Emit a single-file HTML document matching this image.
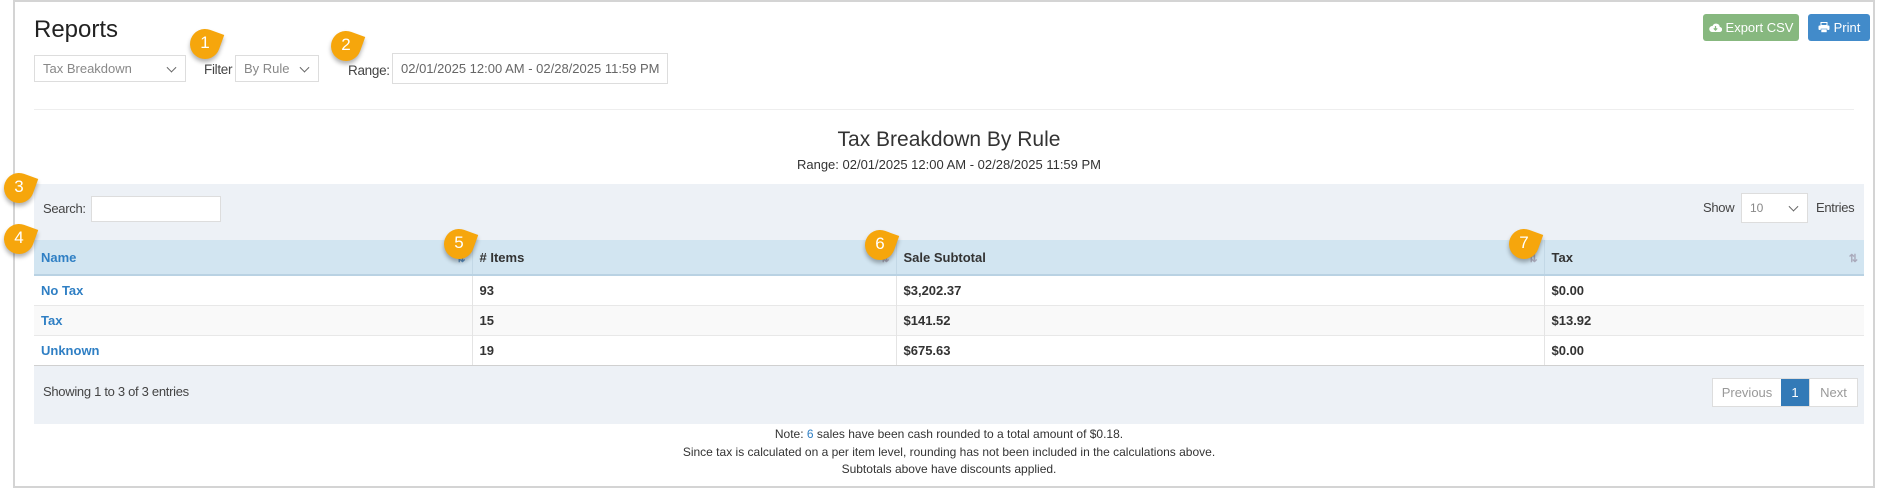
<!DOCTYPE html>
<html><head><meta charset="utf-8"><style>
*{box-sizing:border-box;margin:0;padding:0}
body{width:1878px;height:489px;background:#fff;font-family:"Liberation Sans",sans-serif;color:#333;position:relative;overflow:hidden}
.frame{position:absolute;left:13px;top:0;width:1862px;height:488px;border:2px solid #d4d4d4}
.a{position:absolute}
.sel{position:absolute;border:1px solid #ddd;background:#fff;font-size:13px;color:#888;padding-left:8px;display:flex;align-items:center}
.arr:after{content:"";position:absolute;right:10px;top:50%;width:6px;height:6px;border-right:1.3px solid #666;border-bottom:1.3px solid #666;transform:translateY(-70%) rotate(45deg)}
.lbl{position:absolute;font-size:13.5px;color:#444;letter-spacing:-0.3px}
.btn{position:absolute;color:#fff;font-size:13px;border-radius:3px;display:flex;align-items:center;justify-content:center;gap:4px}
.panel{position:absolute;left:34px;top:184px;width:1830px;height:240px;background:#edf1f6}
table{position:absolute;left:34px;top:240px;width:1830px;border-collapse:collapse;font-size:13px;font-weight:bold}
th{background:#d2e5f1;height:35px;text-align:left;padding-left:7px;border-left:1px solid #c3d8e6;border-bottom:2px solid #b9d2e3;position:relative}
td{height:30px;padding-left:7px;border-left:1px solid #e4e4e4;border-top:1px solid #e8e8e8;background:#fff}
tr:nth-child(odd) td{background:#f9f9f9}
th:first-child,td:first-child{border-left:none}
.blue{color:#2f7fc4}
.mk{position:absolute;width:30px;height:30px;background:#f6a60c;border-radius:50% 0 50% 50%;transform:rotate(20deg);box-shadow:1px 3px 4px rgba(0,0,0,.3)}
.mkn{position:absolute;width:30px;height:30px;color:#fff;font-size:17px;text-align:center;line-height:28px}
.srt{position:absolute;right:6px;top:12px;font-size:11px;color:#aab}
</style></head><body>
<div class="frame"></div>
<div class="a" style="left:34px;top:16px;font-size:24px;color:#222">Reports</div>
<div class="sel arr" style="left:34px;top:55px;width:152px;height:27px">Tax Breakdown</div>
<div class="lbl" style="left:204px;top:62px">Filter</div>
<div class="sel arr" style="left:235px;top:55px;width:84px;height:27px">By Rule</div>
<div class="lbl" style="left:348px;top:63px">Range:</div>
<div class="sel" style="left:392px;top:53px;width:276px;height:31px;color:#666;font-size:13px">02/01/2025 12:00 AM - 02/28/2025 11:59 PM</div>
<div class="btn" style="left:1703px;top:14px;width:96px;height:27px;background:#87b87f">
<svg width="13" height="11" viewBox="0 0 13 11"><path d="M3 10h7.5a2.5 2.5 0 0 0 .3-5A3.8 3.8 0 0 0 3.5 4 3 3 0 0 0 3 10z" fill="#fff"/><path d="M6.5 4v4M4.8 6.3l1.7 1.8 1.7-1.8" stroke="#87b87f" stroke-width="1.2" fill="none"/></svg>Export CSV</div>
<div class="btn" style="left:1808px;top:14px;width:62px;height:27px;background:#428bca">
<svg width="12" height="11" viewBox="0 0 12 11"><rect x="3" y="0.5" width="6" height="3" fill="none" stroke="#fff"/><rect x="0.5" y="3.5" width="11" height="4.5" rx="1" fill="#fff"/><rect x="3" y="7" width="6" height="3.5" fill="#fff" stroke="#428bca" stroke-width=".6"/></svg>Print</div>
<div class="a" style="left:34px;top:109px;width:1820px;height:1px;background:#eee"></div>
<div class="a" style="left:0;width:1878px;text-align:center;top:128px;font-size:21px;color:#333;padding-left:20px">Tax Breakdown By Rule</div>
<div class="a" style="left:0;width:1878px;text-align:center;top:157px;font-size:13px;color:#333;padding-left:20px">Range: 02/01/2025 12:00 AM - 02/28/2025 11:59 PM</div>
<div class="panel"></div>
<div class="lbl" style="left:43px;top:201px;font-size:13px">Search:</div>
<div class="a" style="left:91px;top:196px;width:130px;height:26px;background:#fff;border:1px solid #ddd"></div>
<div class="lbl" style="left:1703px;top:200px;font-size:13px">Show</div>
<div class="sel arr" style="left:1741px;top:193px;width:67px;height:30px;font-size:12px">10</div>
<div class="lbl" style="left:1816px;top:200px;font-size:13px">Entries</div>
<table>
<tr><th style="width:438px" class="blue">Name<span class="srt" style="color:#5b8fc0">⇅</span></th><th style="width:424px"># Items<span class="srt">⇅</span></th><th style="width:648px">Sale Subtotal<span class="srt">⇅</span></th><th>Tax<span class="srt">⇅</span></th></tr>
<tr><td class="blue">No Tax</td><td>93</td><td>$3,202.37</td><td>$0.00</td></tr>
<tr><td class="blue">Tax</td><td>15</td><td>$141.52</td><td>$13.92</td></tr>
<tr><td class="blue">Unknown</td><td>19</td><td>$675.63</td><td>$0.00</td></tr>
</table>
<div class="a" style="left:34px;top:365px;width:1830px;height:1px;background:#d0d0d0"></div>
<div class="lbl" style="left:43px;top:384px;font-size:13px">Showing 1 to 3 of 3 entries</div>
<div class="a" style="left:1712px;top:378px;height:29px;display:flex;font-size:13px;border:1px solid #ddd;background:#fff">
<div style="width:68px;color:#999;text-align:center;line-height:27px">Previous</div>
<div style="width:28px;background:#337ab7;color:#fff;text-align:center;line-height:27px">1</div>
<div style="width:48px;color:#999;text-align:center;line-height:27px;border-left:1px solid #ddd">Next</div></div>
<div class="a" style="left:0;width:1878px;text-align:center;top:426px;font-size:12px;line-height:17.5px;color:#333;padding-left:20px">Note: <span class="blue" style="font-weight:normal">6</span> sales have been cash rounded to a total amount of $0.18.<br>Since tax is calculated on a per item level, rounding has not been included in the calculations above.<br>Subtotals above have discounts applied.</div>
<div class="mk" style="left:190px;top:29px"></div><div class="mkn" style="left:190px;top:29px">1</div>
<div class="mk" style="left:331px;top:31px"></div><div class="mkn" style="left:331px;top:31px">2</div>
<div class="mk" style="left:4px;top:173px"></div><div class="mkn" style="left:4px;top:173px">3</div>
<div class="mk" style="left:4px;top:224px"></div><div class="mkn" style="left:4px;top:224px">4</div>
<div class="mk" style="left:444px;top:229px"></div><div class="mkn" style="left:444px;top:229px">5</div>
<div class="mk" style="left:865px;top:230px"></div><div class="mkn" style="left:865px;top:230px">6</div>
<div class="mk" style="left:1509px;top:229px"></div><div class="mkn" style="left:1509px;top:229px">7</div>
</body></html>
